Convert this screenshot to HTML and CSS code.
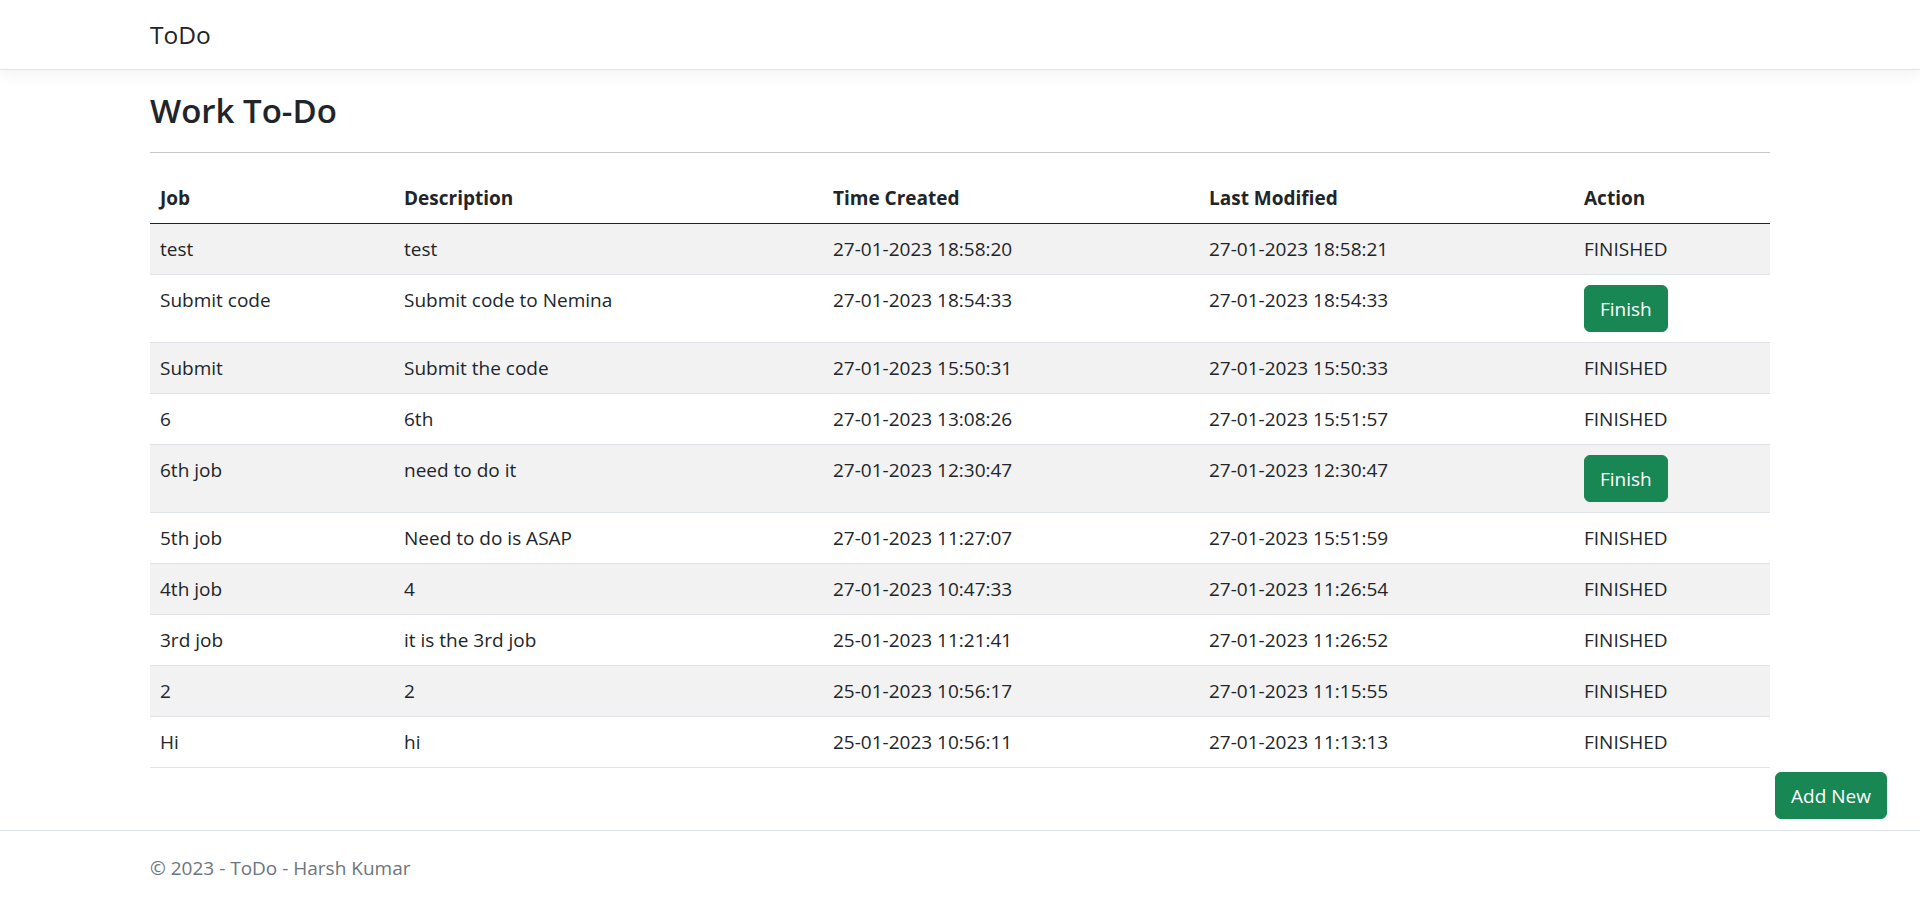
FILE: index.html
```html
<!DOCTYPE html>
<html lang="en">
<head>
<meta charset="utf-8">
<title>Work To-Do - ToDo</title>
<link rel="stylesheet" href="styles.css">
</head>
<body>
<header class="navbar">
  <div class="container">
    <a class="brand" href="#">ToDo</a>
  </div>
</header>
<main class="container main">
  <h3 class="title">Work To-Do</h3>
  <hr class="rule">
  <table class="todo-table">
    <colgroup>
      <col class="c-job"><col class="c-desc"><col class="c-created"><col class="c-mod"><col class="c-action">
    </colgroup>
    <thead>
      <tr><th>Job</th><th>Description</th><th>Time Created</th><th>Last Modified</th><th>Action</th></tr>
    </thead>
    <tbody>
      <tr><td>test</td><td>test</td><td>27-01-2023 18:58:20</td><td>27-01-2023 18:58:21</td><td>FINISHED</td></tr>
      <tr><td>Submit code</td><td>Submit code to Nemina</td><td>27-01-2023 18:54:33</td><td>27-01-2023 18:54:33</td><td><a class="btn" href="#">Finish</a></td></tr>
      <tr><td>Submit</td><td>Submit the code</td><td>27-01-2023 15:50:31</td><td>27-01-2023 15:50:33</td><td>FINISHED</td></tr>
      <tr><td>6</td><td>6th</td><td>27-01-2023 13:08:26</td><td>27-01-2023 15:51:57</td><td>FINISHED</td></tr>
      <tr><td>6th job</td><td>need to do it</td><td>27-01-2023 12:30:47</td><td>27-01-2023 12:30:47</td><td><a class="btn" href="#">Finish</a></td></tr>
      <tr><td>5th job</td><td>Need to do is ASAP</td><td>27-01-2023 11:27:07</td><td>27-01-2023 15:51:59</td><td>FINISHED</td></tr>
      <tr><td>4th job</td><td>4</td><td>27-01-2023 10:47:33</td><td>27-01-2023 11:26:54</td><td>FINISHED</td></tr>
      <tr><td>3rd job</td><td>it is the 3rd job</td><td>25-01-2023 11:21:41</td><td>27-01-2023 11:26:52</td><td>FINISHED</td></tr>
      <tr><td>2</td><td>2</td><td>25-01-2023 10:56:17</td><td>27-01-2023 11:15:55</td><td>FINISHED</td></tr>
      <tr><td>Hi</td><td>hi</td><td>25-01-2023 10:56:11</td><td>27-01-2023 11:13:13</td><td>FINISHED</td></tr>
    </tbody>
  </table>
  <div class="add-row"><a class="btn btn-add" href="#">Add New</a></div>
</main>
<footer class="footer">
  <div class="container">© 2023 - ToDo - Harsh Kumar</div>
</footer>
</body>
</html>
```

FILE: styles.css
```css
* { box-sizing: border-box; }

html, body {
  margin: 0;
  padding: 0;
  height: 100%;
  overflow: hidden;
}

body {
  font-family: "Open Sans", "Noto Sans", "Liberation Sans", sans-serif;
  font-size: 19px;
  line-height: 30px;
  color: #212529;
  background: #fff;
  display: flex;
  flex-direction: column;
}

.container {
  width: 100%;
  max-width: 1650px;
  padding: 0 15px;
  margin: 0 auto;
}

.navbar {
  height: 70px;
  background: #fff;
  border-bottom: 1px solid #dee2e6;
  box-shadow: 0 5px 15px rgba(0, 0, 0, 0.05);
  display: flex;
  align-items: center;
  flex-shrink: 0;
}

.brand {
  font-size: 24.5px;
  line-height: 37px;
  color: #212529;
  text-decoration: none;
  display: inline-block;
}

.main {
  padding-top: 20px;
  flex: 1 0 auto;
}

.title {
  margin: 0 0 10px;
  font-size: 33px;
  line-height: 42px;
  font-weight: 600;
}

.rule {
  margin: 20px 0;
  border: 0;
  border-top: 1px solid #c8c9ca;
  height: 0;
}

.todo-table {
  width: 100%;
  table-layout: fixed;
  border-collapse: collapse;
  margin-bottom: 4px;
}

.c-job { width: 244px; }
.c-desc { width: 429px; }
.c-created { width: 376px; }
.c-mod { width: 375px; }
.c-action { width: 196px; }

.todo-table th,
.todo-table td {
  padding: 10px;
  text-align: left;
  vertical-align: top;
  white-space: nowrap;
}

.todo-table th {
  font-weight: 700;
  border-bottom: 1px solid #212529;
}

.todo-table td {
  border-bottom: 1px solid #dee2e6;
}

.todo-table tbody tr:nth-child(odd) td {
  background: #f2f2f2;
}

.btn {
  display: inline-block;
  padding: 7.5px 15px;
  border: 1px solid #198754;
  border-radius: 6px;
  background: #198754;
  color: #fff;
  text-decoration: none;
  font-size: 19px;
  line-height: 30px;
}

.add-row {
  white-space: nowrap;
  margin-bottom: 11px;
}

.btn-add {
  margin-left: calc(100% + 5px);
}

.footer {
  border-top: 1px solid #dee2e6;
  color: #6c757d;
  padding-top: 4px;
  line-height: 67px;
  height: 72px;
  flex-shrink: 0;
  white-space: nowrap;
}
```
